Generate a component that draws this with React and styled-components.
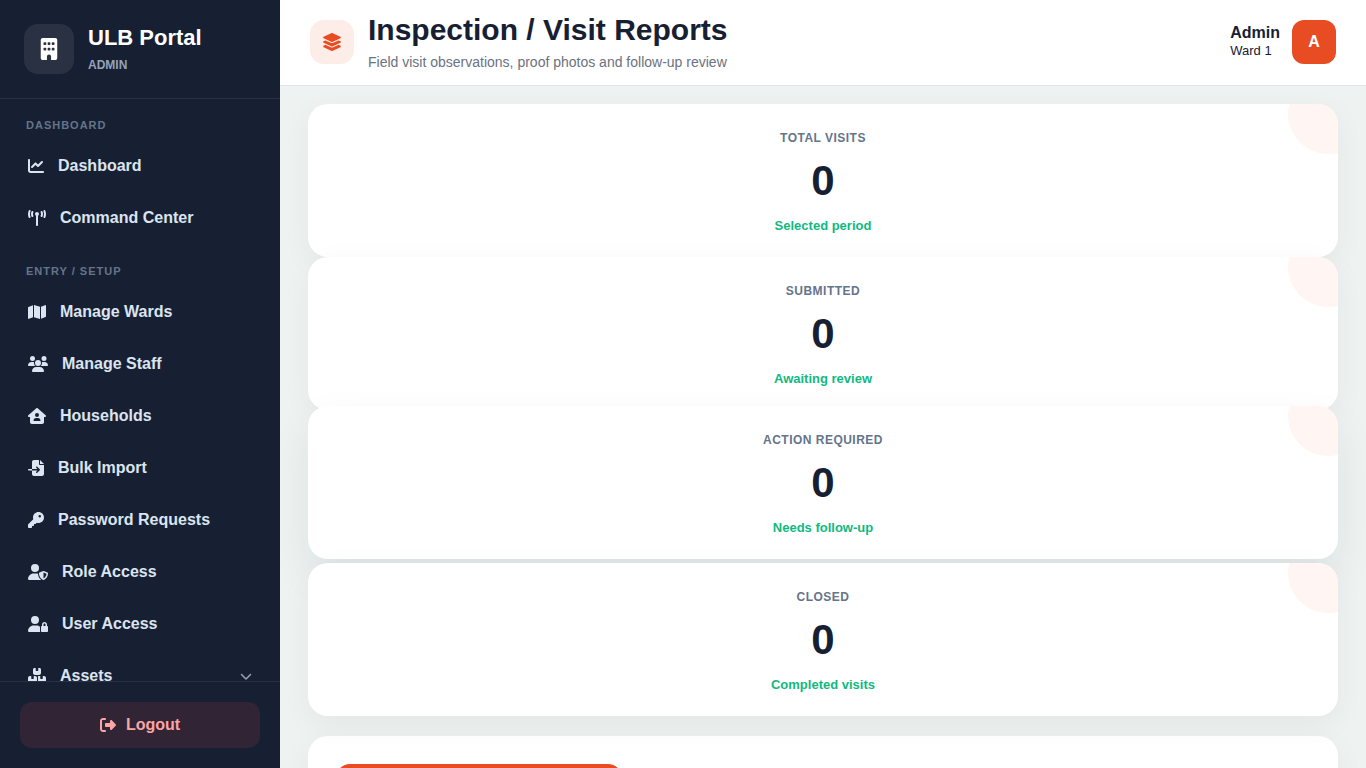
import React from "react";
import styled, { createGlobalStyle } from "styled-components";
import {
  FaBuilding,
  FaChartLine,
  FaTowerBroadcast,
  FaMap,
  FaUsers,
  FaHouseUser,
  FaFileImport,
  FaKey,
  FaUserShield,
  FaUserLock,
  FaBoxesStacked,
  FaChevronDown,
  FaRightFromBracket,
  FaLayerGroup,
} from "react-icons/fa6";

const GlobalStyle = createGlobalStyle`
  *, *::before, *::after { box-sizing: border-box; }
  body {
    margin: 0;
    background: #eef2f1;
    color: #172033;
    font-family: "Liberation Sans", Arial, sans-serif;
    font-size: 16px;
  }
  h1, h2, p { margin: 0; }
  button { font: inherit; cursor: pointer; border: 0; }
  svg { display: block; flex: none; }
`;

const Shell = styled.div`
  display: flex;
  height: 100vh;
  overflow: hidden;
`;

const Sidebar = styled.aside`
  display: flex;
  flex-direction: column;
  flex: 0 0 280px;
  background: #172033;
  color: #fff;
`;

const Brand = styled.div`
  display: flex;
  align-items: center;
  gap: 14px;
  padding: 24px;
  border-bottom: 1px solid rgba(255, 255, 255, 0.08);
`;

const BrandMark = styled.div`
  display: grid;
  place-items: center;
  width: 50px;
  height: 50px;
  border-radius: 14px;
  background: rgba(255, 255, 255, 0.08);
  font-size: 22px;
`;

const BrandText = styled.div`
  display: flex;
  flex-direction: column;
  gap: 8px;
`;

const BrandName = styled.h2`
  font-size: 22px;
  line-height: 24px;
`;

const BrandRole = styled.span`
  color: #94a3b8;
  font-size: 12px;
  line-height: 14px;
  font-weight: 700;
`;

const Nav = styled.nav`
  display: flex;
  flex-direction: column;
  gap: 24px;
  flex: 1;
  min-height: 0;
  overflow: hidden;
  padding: 20px 12px;
`;

const NavSection = styled.section`
  display: flex;
  flex-direction: column;
  gap: 6px;
`;

const NavLabel = styled.h2`
  padding: 0 14px;
  margin-bottom: 5px;
  color: #64748b;
  font-size: 11px;
  line-height: 13px;
  letter-spacing: 1px;
  text-transform: uppercase;
`;

const NavLink = styled.a`
  display: flex;
  align-items: center;
  gap: 14px;
  padding: 14px 16px;
  border-radius: 14px;
  color: #dbe4f0;
  font-weight: 700;
  line-height: 18px;
  text-decoration: none;
`;

const NavIcon = styled.span`
  flex: none;

  svg {
    width: ${(p) => p.$width}px;
    height: 16px;
  }
`;

const Caret = styled.span`
  margin-left: auto;
  color: #94a3b8;
  font-size: 12px;
`;

const SidebarFooter = styled.div`
  padding: 20px;
  border-top: 1px solid rgba(255, 255, 255, 0.08);
`;

const LogoutButton = styled.button`
  display: flex;
  align-items: center;
  justify-content: center;
  gap: 10px;
  width: 100%;
  padding: 14px;
  border-radius: 12px;
  background: rgba(239, 68, 68, 0.12);
  color: #fca5a5;
  font-weight: 700;
  line-height: 18px;
`;

const Main = styled.main`
  flex: 1;
  min-width: 0;
  display: flex;
  flex-direction: column;
`;

const TopBar = styled.header`
  display: flex;
  align-items: center;
  justify-content: space-between;
  padding: 13px 30px 14px;
  background: #fff;
  border-bottom: 1px solid #dfe5ec;
`;

const TitleGroup = styled.div`
  display: flex;
  align-items: center;
  gap: 14px;
`;

const TitleIcon = styled.div`
  display: grid;
  place-items: center;
  width: 44px;
  height: 44px;
  border-radius: 14px;
  background: #fdede8;
  color: #e84c22;
  font-size: 20px;
`;

const Title = styled.h1`
  font-size: 30px;
  line-height: 34px;
`;

const Subtitle = styled.p`
  margin-top: 6px;
  color: #6b7280;
  font-size: 14px;
  line-height: 18px;
`;

const Account = styled.div`
  display: flex;
  align-items: center;
  gap: 12px;
`;

const AccountName = styled.div`
  font-weight: 700;
  line-height: 18px;
`;

const AccountWard = styled.div`
  font-size: 13px;
  line-height: 18px;
`;

const Avatar = styled.div`
  display: grid;
  place-items: center;
  width: 44px;
  height: 44px;
  border-radius: 12px;
  background: #e84c22;
  color: #fff;
  font-weight: 700;
`;

const Content = styled.div`
  flex: 1;
  min-height: 0;
  overflow: hidden;
  padding: 18px 28px;
`;

const Stats = styled.div`
  margin-bottom: 20px;
`;

const StatCard = styled.article`
  position: relative;
  overflow: hidden;
  display: flex;
  flex-direction: column;
  align-items: center;
  padding: 27px 24px 23px;
  border-radius: 20px;
  background: #fff;
  box-shadow: ${(p) =>
    p.$raised
      ? "0 18px 40px rgba(15, 50, 60, 0.08)"
      : "0 8px 30px rgba(15, 55, 50, 0.05)"};
  transform: ${(p) => (p.$raised ? "translateY(-4px)" : "none")};

  &::after {
    content: "";
    position: absolute;
    top: -30px;
    right: -30px;
    width: 80px;
    height: 80px;
    border-radius: 50%;
    background: #fff5f3;
  }
`;

const StatLabel = styled.h2`
  color: #64748b;
  font-size: 12px;
  line-height: 14px;
  letter-spacing: 0.04em;
  text-transform: uppercase;
`;

const StatValue = styled.div`
  margin: 11px 0 12px;
  font-size: 42px;
  font-weight: 700;
  line-height: 50px;
`;

const StatNote = styled.div`
  color: #10b981;
  font-size: 13px;
  font-weight: 700;
  line-height: 16px;
`;

const Panel = styled.section`
  padding: 28px;
  border-radius: 20px;
  background: #fff;
  box-shadow: 0 8px 30px rgba(15, 55, 50, 0.05);
`;

const PanelButton = styled.button`
  display: block;
  width: 286px;
  height: 48px;
  border-radius: 14px;
  background: #e84c22;
`;

const sections = [
  {
    label: "Dashboard",
    items: [
      { text: "Dashboard", Icon: FaChartLine, width: 16 },
      { text: "Command Center", Icon: FaTowerBroadcast, width: 18 },
    ],
  },
  {
    label: "Entry / Setup",
    items: [
      { text: "Manage Wards", Icon: FaMap, width: 18 },
      { text: "Manage Staff", Icon: FaUsers, width: 20 },
      { text: "Households", Icon: FaHouseUser, width: 18 },
      { text: "Bulk Import", Icon: FaFileImport, width: 16 },
      { text: "Password Requests", Icon: FaKey, width: 16 },
      { text: "Role Access", Icon: FaUserShield, width: 20 },
      { text: "User Access", Icon: FaUserLock, width: 20 },
      { text: "Assets", Icon: FaBoxesStacked, width: 18, expandable: true },
    ],
  },
];

const stats = [
  { label: "Total Visits", value: 0, note: "Selected period" },
  { label: "Submitted", value: 0, note: "Awaiting review" },
  { label: "Action Required", value: 0, note: "Needs follow-up", raised: true },
  { label: "Closed", value: 0, note: "Completed visits" },
];

export default function App() {
  return (
    <Shell>
      <GlobalStyle />
      <Sidebar>
        <Brand>
          <BrandMark>
            <FaBuilding />
          </BrandMark>
          <BrandText>
            <BrandName>ULB Portal</BrandName>
            <BrandRole>ADMIN</BrandRole>
          </BrandText>
        </Brand>
        <Nav>
          {sections.map((section) => (
            <NavSection key={section.label}>
              <NavLabel>{section.label}</NavLabel>
              {section.items.map(({ text, Icon, width, expandable }) => (
                <NavLink key={text} href="#">
                  <NavIcon $width={width}>
                    <Icon />
                  </NavIcon>
                  {text}
                  {expandable && (
                    <Caret>
                      <FaChevronDown />
                    </Caret>
                  )}
                </NavLink>
              ))}
            </NavSection>
          ))}
        </Nav>
        <SidebarFooter>
          <LogoutButton type="button">
            <FaRightFromBracket />
            Logout
          </LogoutButton>
        </SidebarFooter>
      </Sidebar>
      <Main>
        <TopBar>
          <TitleGroup>
            <TitleIcon>
              <FaLayerGroup />
            </TitleIcon>
            <div>
              <Title>Inspection / Visit Reports</Title>
              <Subtitle>Field visit observations, proof photos and follow-up review</Subtitle>
            </div>
          </TitleGroup>
          <Account>
            <div>
              <AccountName>Admin</AccountName>
              <AccountWard>Ward 1</AccountWard>
            </div>
            <Avatar>A</Avatar>
          </Account>
        </TopBar>
        <Content>
          <Stats>
            {stats.map((stat) => (
              <StatCard key={stat.label} $raised={stat.raised}>
                <StatLabel>{stat.label}</StatLabel>
                <StatValue>{stat.value}</StatValue>
                <StatNote>{stat.note}</StatNote>
              </StatCard>
            ))}
          </Stats>
          <Panel>
            <PanelButton type="button" aria-label="Add visit report" />
          </Panel>
        </Content>
      </Main>
    </Shell>
  );
}
